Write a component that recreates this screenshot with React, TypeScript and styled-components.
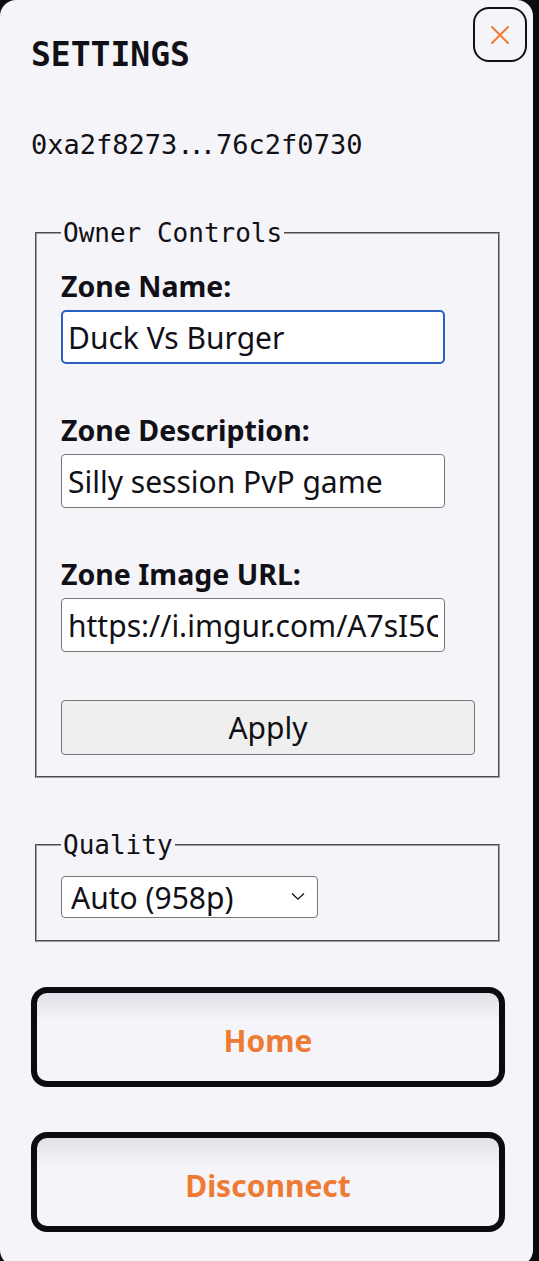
import React from 'react';
import styled, { createGlobalStyle } from 'styled-components';

const SANS = `"Noto Sans", "Open Sans", sans-serif`;
const MONO = `"DejaVu Sans Mono", "Liberation Mono", monospace`;
const INK = '#111016';
const ORANGE = '#ee7b34';

const zoneFields = [
  { label: 'Zone Name:', value: 'Duck Vs Burger', focused: true },
  { label: 'Zone Description:', value: 'Silly session PvP game', focused: false },
  { label: 'Zone Image URL:', value: 'https://i.imgur.com/A7sI5Qk.png', focused: false },
];

export default function App() {
  return (
    <>
      <GlobalStyle />
      <Panel>
        <CloseButton aria-label='Close'>
          <svg width='18' height='18' viewBox='0 0 18 18'>
            <path d='M1 1L17 17M17 1L1 17' stroke={ORANGE} strokeWidth='2' strokeLinecap='round' />
          </svg>
        </CloseButton>

        <Title>SETTINGS</Title>
        <Address>
          0xa2f8273<Dots>...</Dots>76c2f0730
        </Address>

        <Fieldset $gap={60}>
          <Legend>Owner Controls</Legend>
          <FieldStack>
            {zoneFields.map((field) => (
              <Field key={field.label}>
                <FieldLabel>{field.label}</FieldLabel>
                <TextInput $focused={field.focused} defaultValue={field.value} />
              </Field>
            ))}
            <ApplyButton>Apply</ApplyButton>
          </FieldStack>
        </Fieldset>

        <Fieldset $gap={52} $compact>
          <Legend>Quality</Legend>
          <SelectWrap>
            <QualitySelect defaultValue='auto'>
              <option value='auto'>Auto (958p)</option>
              <option value='720'>720p</option>
              <option value='480'>480p</option>
            </QualitySelect>
            <Chevron width='14' height='9' viewBox='0 0 14 9'>
              <path d='M1 1.5L7 7.2L13 1.5' fill='none' stroke={INK} strokeWidth='1.3' />
            </Chevron>
          </SelectWrap>
        </Fieldset>

        <NavList>
          <NavButton>Home</NavButton>
          <NavButton>Disconnect</NavButton>
        </NavList>
      </Panel>
    </>
  );
}

const GlobalStyle = createGlobalStyle`
  html, body {
    margin: 0;
    padding: 0;
    background: #0c0b10;
    overflow: hidden;
  }
  * {
    box-sizing: border-box;
  }
`;

const Panel = styled.div`
  position: relative;
  display: flex;
  flex-direction: column;
  width: 533px;
  height: 1266px;
  padding: 38px 28px 0 31px;
  background: #f5f4f9;
  border-radius: 16px;
  color: ${INK};
`;

const CloseButton = styled.button`
  position: absolute;
  top: 7px;
  right: 6px;
  width: 54px;
  height: 55px;
  display: flex;
  align-items: center;
  justify-content: center;
  padding: 0;
  background: transparent;
  border: 2px solid ${INK};
  border-radius: 16px;
  cursor: pointer;
`;

const Title = styled.h1`
  margin: 0;
  font-family: ${MONO};
  font-size: 33px;
  font-weight: 700;
  line-height: 1;
`;

const Address = styled.div`
  margin-top: 60px;
  font-family: ${MONO};
  font-size: 27px;
  line-height: 1;
`;

const Dots = styled.span`
  letter-spacing: -5px;
  margin-right: 5px;
`;

const Fieldset = styled.fieldset<{ $gap: number; $compact?: boolean }>`
  margin: ${(p) => p.$gap}px 5px 0 4px;
  padding: ${(p) => (p.$compact ? '16px 23px 22px 24px' : '20px 23px 21px 24px')};
  border: 2px groove #a0a0a4;
  min-width: 0;
`;

const Legend = styled.legend`
  padding: 0 2px;
  font-family: ${MONO};
  font-size: 26px;
  line-height: 30px;
`;

const FieldStack = styled.div`
  display: flex;
  flex-direction: column;
  gap: 48px;
`;

const Field = styled.label`
  display: flex;
  flex-direction: column;
  gap: 6px;
`;

const FieldLabel = styled.span`
  font-family: ${SANS};
  font-size: 28.5px;
  font-weight: 700;
  line-height: 36px;
`;

const TextInput = styled.input<{ $focused?: boolean }>`
  width: 384px;
  height: 54px;
  padding: 0 6px 0 ${(p) => (p.$focused ? 5 : 6)}px;
  font-family: ${SANS};
  font-size: 30px;
  color: ${INK};
  background: #fff;
  border: ${(p) => (p.$focused ? '2px solid #2c5fc4' : '1px solid #767676')};
  border-radius: ${(p) => (p.$focused ? 5 : 4)}px;
  outline: none;
`;

const ApplyButton = styled.button`
  height: 55px;
  font-family: ${SANS};
  font-size: 30px;
  color: ${INK};
  background: #efefef;
  border: 1px solid #767676;
  border-radius: 4px;
`;

const SelectWrap = styled.div`
  position: relative;
  width: 257px;
  height: 42px;
`;

const QualitySelect = styled.select`
  appearance: none;
  width: 100%;
  height: 100%;
  padding: 0 30px 0 9px;
  font-family: ${SANS};
  font-size: 30px;
  color: ${INK};
  background: #fff;
  border: 1px solid #767676;
  border-radius: 4px;
`;

const Chevron = styled.svg`
  position: absolute;
  right: 13px;
  top: 16px;
  pointer-events: none;
`;

const NavList = styled.div`
  display: flex;
  flex-direction: column;
  gap: 45px;
  margin-top: 45px;
`;

const NavButton = styled.button`
  height: 100px;
  padding: 6px 0 0;
  font-family: ${SANS};
  font-size: 30px;
  font-weight: 700;
  color: ${ORANGE};
  background: linear-gradient(to bottom, #e2e0e8 0%, #f5f4f9 32%, #f5f4f9 100%);
  border: 6px solid #0c0b10;
  border-radius: 16px;
  cursor: pointer;
`;
